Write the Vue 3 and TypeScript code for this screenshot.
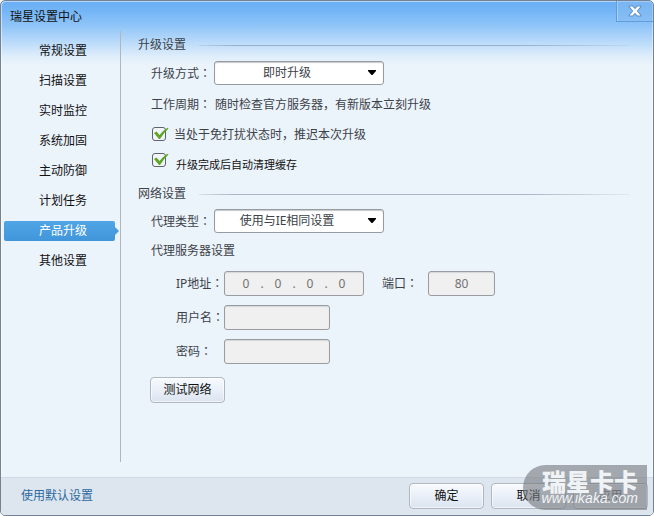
<script setup lang="ts">
import { ref } from 'vue'

const navItems: string[] = ['常规设置', '扫描设置', '实时监控', '系统加固', '主动防御', '计划任务', '产品升级', '其他设置']
const active = ref('产品升级')
const upgradeMode = ref('即时升级')
const proxyType = ref('使用与IE相同设置')
const postpone = ref(true)
const cleanCache = ref(true)
const ip = ref<string[]>(['0', '0', '0', '0'])
const port = ref('80')
const user = ref('')
const password = ref('')
</script>

<template>
  <div class="window">
    <header class="titlebar">
      <h1 class="title">瑞星设置中心</h1>
      <button class="close" type="button" aria-label="关闭">
        <svg width="14" height="12" viewBox="0 0 14 12">
          <path d="M.5 .5h4.500L7 2.800 9 .5h4.500v1.500L9.800 6l3.700 4v1.500H9L7 9.200 5 11.500H.5V10l3.700-4L.5 2z" fill="#5f92cb" />
          <path d="M1.500 1.500h3L7 4.300l2.500-2.800h3L8.700 6l3.800 4.500h-3L7 7.700l-2.500 2.800h-3L5.300 6z" fill="#fff" />
        </svg>
      </button>
    </header>

    <div class="body">
      <nav class="nav">
        <button
          v-for="item in navItems"
          :key="item"
          type="button"
          class="nav-item"
          :class="{ selected: item === active }"
          @click="active = item"
        >
          {{ item }}
        </button>
      </nav>

      <main class="content">
        <h2 class="section">升级设置</h2>
        <div class="row select-row">
          <label class="label" for="mode">升级方式<span class="colon">：</span></label>
          <span class="select-box">
            <select id="mode" v-model="upgradeMode">
              <option>即时升级</option>
            </select>
            <svg class="arrow" width="8" height="5" viewBox="0 0 8 5"><path d="M0 0h8v1L4.500 5h-1L0 1z" fill="#000" /></svg>
          </span>
        </div>
        <div class="row period">
          <span class="label">工作周期<span class="colon">：</span></span>
          <span>随时检查官方服务器，有新版本立刻升级</span>
        </div>
        <div class="row check">
          <span class="tick">
            <input id="postpone" v-model="postpone" type="checkbox" />
            <svg v-if="postpone" width="18" height="14" viewBox="0 0 18 14"><path d="M2 6L4.500 4.500 7.500 8Q11 3.500 15.500 .800L16.500 1.500Q11.500 6 8 12H7z" fill="#5fa526" /></svg>
          </span>
          <label for="postpone">当处于免打扰状态时，推迟本次升级</label>
        </div>
        <div class="row check small">
          <span class="tick">
            <input id="clean" v-model="cleanCache" type="checkbox" />
            <svg v-if="cleanCache" width="18" height="14" viewBox="0 0 18 14"><path d="M2 6L4.500 4.500 7.500 8Q11 3.500 15.500 .800L16.500 1.500Q11.500 6 8 12H7z" fill="#5fa526" /></svg>
          </span>
          <label for="clean">升级完成后自动清理缓存</label>
        </div>

        <h2 class="section network">网络设置</h2>
        <div class="row select-row">
          <label class="label" for="proxy">代理类型<span class="colon">：</span></label>
          <span class="select-box">
            <select id="proxy" v-model="proxyType">
              <option>使用与IE相同设置</option>
            </select>
            <svg class="arrow" width="8" height="5" viewBox="0 0 8 5"><path d="M0 0h8v1L4.500 5h-1L0 1z" fill="#000" /></svg>
          </span>
        </div>
        <h3 class="row sub">代理服务器设置</h3>
        <div class="fields">
          <label for="ip0">IP地址<span class="colon">：</span></label>
          <div class="pair">
            <div class="ip">
              <template v-for="(part, i) in ip" :key="i">
                <span v-if="i > 0">.</span>
                <input :id="'ip' + i" v-model="ip[i]" type="text" disabled :aria-label="'IP地址 ' + (i + 1)" />
              </template>
            </div>
            <label class="port-label" for="port">端口<span class="colon">：</span></label>
            <input id="port" v-model="port" class="box port" type="text" disabled />
          </div>
          <label for="user">用户名<span class="colon">：</span></label>
          <input id="user" v-model="user" class="box" type="text" disabled />
          <label for="pwd">密码<span class="colon">：</span></label>
          <input id="pwd" v-model="password" class="box" type="password" disabled />
        </div>
        <button class="btn test" type="button">测试网络</button>
      </main>
    </div>

    <footer class="footer">
      <a class="defaults" href="#">使用默认设置</a>
      <button class="btn" type="button">确定</button>
      <button class="btn" type="button">取消</button>
      <button class="btn" type="button" disabled>应用</button>
      <div class="watermark">
        <strong>瑞星卡卡</strong>
        <em>www.ikaka.com</em>
      </div>
    </footer>
  </div>
</template>

<style>
body {
  margin: 0;
  background: #fff;
}
</style>

<style scoped>
* {
  box-sizing: border-box;
}
.window {
  display: flex;
  flex-direction: column;
  min-height: 100vh;
  border: 1px solid #748293;
  border-radius: 5px;
  overflow: hidden;
  background: linear-gradient(#6aaef5 0, #74b5f6 10px, #8ec4f8 24px, #bcdcfa 42px, #e0eefb 56px, #ebf3fb 64px);
  box-shadow: inset 1px 1px 0 rgba(255, 255, 255, 0.5), inset -1px 0 0 rgba(255, 255, 255, 0.4);
  color: #3c4248;
  font: 12px/20px "Noto Sans", "Noto Sans CJK SC", sans-serif;
}
button,
input,
select {
  font: inherit;
  color: inherit;
  margin: 0;
  padding: 0;
}
h1,
h2,
h3 {
  margin: 0;
  font-size: 12px;
  font-weight: 400;
}
.colon {
  font-family: "Noto Sans CJK TC", sans-serif;
}
.titlebar {
  display: flex;
  justify-content: space-between;
  align-items: flex-start;
  height: 30px;
}
.title {
  padding: 6px 0 0 9px;
  color: #111;
}
.close {
  display: flex;
  align-items: center;
  justify-content: center;
  width: 37px;
  height: 21px;
  border: solid #5f9ddb;
  border-width: 0 0 1px 1px;
  background: rgba(140, 190, 240, 0.45);
  box-shadow: inset 1px 0 0 rgba(255, 255, 255, 0.3);
}
.body {
  display: flex;
  flex: 1;
  padding-bottom: 15px;
}
.nav {
  display: flex;
  flex-direction: column;
  gap: 10px;
  width: 120px;
  padding: 10px 5px 0 3px;
  border-right: 1px solid #b3b7bd;
}
.nav-item {
  position: relative;
  height: 20px;
  padding-left: 7px;
  border: 0;
  border-radius: 2px;
  background: none;
  color: #111;
}
.nav-item.selected {
  background: linear-gradient(#50a5e6, #4195da);
  color: #fff;
}
.nav-item.selected::after {
  content: "";
  position: absolute;
  left: 100%;
  top: 6px;
  border: 4px solid transparent;
  border-right: 0;
  border-left-color: #479bde;
}
.content {
  flex: 1;
  padding: 4px 23px 0 17px;
}
.section {
  display: flex;
  align-items: center;
  gap: 13px;
}
.section::after {
  content: "";
  flex: 1;
  height: 1px;
  background: linear-gradient(90deg, rgba(140, 155, 175, 0.2), rgba(140, 155, 175, 0.7) 8%, rgba(140, 155, 175, 0.7) 75%, rgba(140, 155, 175, 0.1));
}
.network {
  margin-top: 9px;
}
.row {
  display: flex;
  align-items: center;
  padding-left: 13px;
}
.label {
  width: 63px;
}
.period .label {
  width: 64px;
}
.select-row {
  margin-top: 6px;
}
.network + .select-row {
  margin-top: 5px;
}
.select-box {
  position: relative;
  width: 170px;
}
select {
  display: block;
  appearance: none;
  width: 100%;
  height: 24px;
  padding: 0 24px 0 0;
  border: 1px solid #979ca2;
  border-radius: 3px;
  background: #fff;
  box-shadow: inset 0 1px 1px #c6c9cc;
  text-align-last: center;
}
.arrow {
  position: absolute;
  right: 8px;
  top: 9px;
}
.period {
  margin-top: 9px;
}
.check {
  align-items: flex-start;
  gap: 8px;
  margin-top: 10px;
  padding-left: 14px;
}
.check .tick {
  margin-top: 2px;
}
.check.small {
  gap: 10px;
  margin-top: 8px;
  color: #111;
  font-size: 11px;
}
.small .tick {
  margin-top: 0;
}
.small label {
  padding-top: 2px;
}
.tick {
  position: relative;
  width: 14px;
  height: 14px;
}
.tick input {
  display: block;
  appearance: none;
  width: 14px;
  height: 14px;
  border: 1px solid #5c646e;
  border-radius: 3px;
  background: #f2f6fa;
}
.tick svg {
  position: absolute;
  left: 0;
  top: 0;
  pointer-events: none;
}
.sub {
  margin-top: 8px;
}
.fields {
  display: grid;
  grid-template-columns: 48px 1fr;
  row-gap: 9px;
  align-items: center;
  margin-top: 10px;
  padding-left: 38px;
}
.fields label {
  white-space: nowrap;
}
.pair {
  display: flex;
  align-items: center;
}
.box,
.ip {
  width: 106px;
  height: 25px;
  border: 1px solid #999da2;
  border-radius: 3px;
  background: #f0f0f0;
  box-shadow: inset 0 1px 1px #d4d6d8;
  color: #737373;
}
.ip {
  display: flex;
  align-items: center;
  justify-content: center;
  width: 140px;
}
.ip input {
  width: 28px;
  border: 0;
  background: none;
  text-align: center;
}
.ip span {
  width: 4px;
  text-align: center;
}
.port-label {
  width: 46px;
  margin-left: 18px;
}
.port {
  width: 67px;
  text-align: center;
}
.btn {
  width: 75px;
  height: 26px;
  border: 1px solid #b0b7c0;
  border-radius: 4px;
  background: linear-gradient(#f7faff, #eaf0f9 50%, #dae3ef);
  box-shadow: inset 0 0 0 1px rgba(255, 255, 255, 0.6);
  color: #111;
}
.btn:disabled {
  color: #666b73;
  background: #dfe6ef;
}
.test {
  margin: 13px 0 0 12px;
}
.footer {
  position: relative;
  display: flex;
  align-items: center;
  gap: 7px;
  height: 38px;
  padding: 0 5px 2px 20px;
  border-top: 1px solid #d0d9e4;
  background: #dde5ef;
}
.defaults {
  margin-right: auto;
  color: #2b6a9e;
  text-decoration: none;
}
.watermark {
  position: absolute;
  right: 6px;
  bottom: 5px;
  display: flex;
  flex-direction: column;
  align-items: flex-end;
  width: 124px;
  height: 45px;
  padding: 6px 9px 0 0;
  border-radius: 23px 0 0 23px;
  background: rgba(115, 119, 124, 0.6);
  color: #f0f3f6;
}
.watermark strong {
  font: 900 24px/20px "Noto Sans CJK SC", sans-serif;
}
.watermark em {
  font: italic 14px/14px "Liberation Sans", sans-serif;
}
</style>
